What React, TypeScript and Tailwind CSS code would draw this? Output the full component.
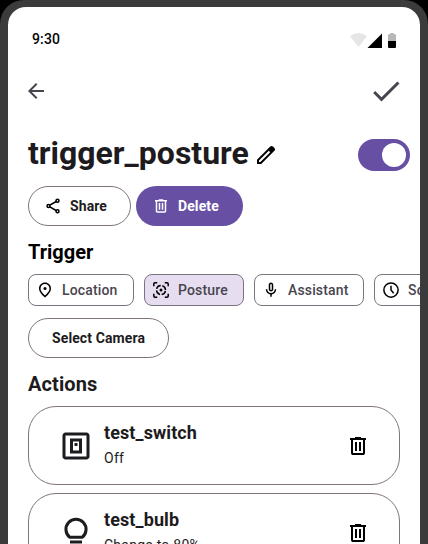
import type { ReactNode } from "react";

type IconProps = { size: number; className?: string; children: ReactNode };

function Icon({ size, className = "", children }: IconProps) {
  return (
    <svg width={size} height={size} viewBox="0 0 24 24" fill="currentColor" className={"shrink-0 " + className}>
      {children}
    </svg>
  );
}

const share = (
  <g fill="none" stroke="currentColor" strokeWidth="2">
    <circle cx="18" cy="5" r="2" />
    <circle cx="6" cy="12" r="2" />
    <circle cx="18" cy="19" r="2" />
    <path d="M7.8 10.9 16.2 6M7.8 13.1l8.4 4.9" />
  </g>
);
const trash = (
  <path d="M7 21q-.825 0-1.412-.587T5 19V6H4V4h5V3h6v1h5v2h-1v13q0 .825-.587 1.413T17 21zM17 6H7v13h10zM9 17h2V8H9zm4 0h2V8h-2z" />
);
const pin = (
  <>
    <path d="M12 2c4.2 0 8 3.22 8 8.2 0 3.32-2.67 7.25-8 11.8-5.33-4.55-8-8.48-8-11.8C4 5.22 7.8 2 12 2m6 8.2C18 6.57 15.35 4 12 4s-6 2.57-6 6.2c0 2.34 1.95 5.44 6 9.14 4.05-3.7 6-6.8 6-9.14" />
    <circle cx="12" cy="10" r="2" />
  </>
);
const posture = (
  <>
    <path
      d="M2.4 7V4q0-1.6 1.6-1.6h3M17 2.4h3q1.6 0 1.6 1.6v3M21.6 17v3q0 1.6-1.6 1.6h-3M7 21.6H4q-1.6 0-1.6-1.6v-3"
      fill="none"
      stroke="currentColor"
      strokeWidth="2"
    />
    <circle cx="12" cy="12" r="6" fill="none" stroke="currentColor" strokeWidth="2" strokeDasharray="7.2 2.225" strokeDashoffset="-1.11" />
    <circle cx="12" cy="12" r="2" />
  </>
);
const mic = (
  <path d="M12 14c1.66 0 3-1.34 3-3V5c0-1.66-1.34-3-3-3S9 3.34 9 5v6c0 1.66 1.34 3 3 3m-1-9c0-.55.45-1 1-1s1 .45 1 1v6c0 .55-.45 1-1 1s-1-.45-1-1zm6 6c0 2.76-2.24 5-5 5s-5-2.24-5-5H5c0 3.53 2.61 6.43 6 6.92V21h2v-3.08c3.39-.49 6-3.39 6-6.92z" />
);
const clock = (
  <g fill="none" stroke="currentColor" strokeWidth="2">
    <circle cx="12" cy="12" r="9.5" />
    <path d="M12 6.2V12l3.6 4.2" />
  </g>
);
const wallSwitch = (
  <path d="M5 3h14q.83 0 1.41.59T21 5v14q0 .83-.59 1.41T19 21H5q-.83 0-1.41-.59T3 19V5q0-.83.59-1.41T5 3m0 2v14h14V5zm3 2h8v10H8zm2 2v6h4V9zm1 1h2v2h-2z" fillRule="evenodd" />
);
const bulb = (
  <>
    <path d="M7.9 14.9A6.7 6.7 0 1 1 16.1 14.9z" fill="none" stroke="currentColor" strokeWidth="2" />
    <path d="M8 17h8v2H8zm1.8 3h4.4q0 2-2.2 2t-2.2-2" />
  </>
);

function Chip({ icon, label, className }: { icon: ReactNode; label: string; className: string }) {
  return (
    <div className={"flex h-8 shrink-0 items-center gap-2 rounded-lg border border-[#79747e] pl-[7px] text-sm font-medium tracking-[0.15px] text-[#49454f] " + className}>
      <Icon size={18} className="text-black">{icon}</Icon>
      <span>{label}</span>
    </div>
  );
}

function ActionCard({ icon, name, state }: { icon: ReactNode; name: string; state: string }) {
  return (
    <div className="flex h-[79px] shrink-0 items-center rounded-[28px] border border-[#7f747a] pr-[29px] pb-px pl-[29px] text-[#1d1b20]">
      <Icon size={36} className="mt-px">{icon}</Icon>
      <div className="ml-[10px] flex-1">
        <div className="text-lg leading-[26px] font-bold tracking-[0.1px]">{name}</div>
        <div className="text-sm leading-6 tracking-[0.25px]">{state}</div>
      </div>
      <Icon size={24} className="mt-px text-black">{trash}</Icon>
    </div>
  );
}

export default function App() {
  return (
    <div className="h-[544px] w-[428px] overflow-hidden bg-black font-['Roboto',sans-serif]">
      <div className="h-full rounded-t-[24px] bg-[#3b3b3b] px-2 pt-[7px]">
        <main className="flex h-full flex-col overflow-hidden rounded-t-[18px] bg-white pl-5">
          <div className="flex h-16 shrink-0 items-center justify-between pr-6 pl-1 text-sm font-medium tracking-[0.14px] text-[#050505]">
            <span>9:30</span>
            <svg width="46" height="15" viewBox="0 0 46 15" className="mt-[3px]">
              <path d="M0 3.2Q8.5-3.2 17 3.2L8.5 14z" fill="#e6e6e6" />
              <path d="M17.5 15H32V.5z" fill="#000" />
              <path d="M38 2.2q0-.9.9-.9h1.3V0h3.6v1.3h1.3q.9 0 .9.9V8h-8z" fill="#b8b8b8" />
              <path d="M38 8h8v6q0 1-1 1h-6q-1 0-1-1z" fill="#000" />
            </svg>
          </div>
          <div className="flex h-10 shrink-0 items-center justify-between pr-4 text-[#49454f]">
            <Icon size={24} className="-ml-1">
              <path d="M20 11H7.83l5.59-5.59L12 4l-8 8 8 8 1.41-1.41L7.83 13H20z" />
            </Icon>
            <Icon size={36}>
              <path d="M9 16.17 4.83 12l-1.42 1.41L9 19 21 7l-1.41-1.41z" />
            </Icon>
          </div>
          <div className="mt-6 flex h-10 shrink-0 items-center pr-[10px]">
            <h1 className="w-[226px] pb-1 text-[32px] leading-10 font-bold text-[#1d1b20]">trigger_posture</h1>
            <Icon size={24} className="text-black">
              <path d="M5 19h1.4L16.2 9.2l-1.4-1.4L5 17.6zM3 21v-4.25L16.2 3.58q.3-.28.66-.43T17.63 3t.77.15.65.45l1.37 1.4q.3.28.44.65t.14.75q0 .4-.14.76t-.44.67L7.25 21z" fillRule="evenodd" />
            </Icon>
            <div className="mr-0 ml-auto flex h-8 w-[52px] items-center justify-end rounded-full bg-[#6750a4] pr-1">
              <div className="size-6 rounded-full bg-white" />
            </div>
          </div>
          <div className="mt-[11px] flex shrink-0 gap-[5px] text-sm font-bold tracking-[0.1px]">
            <button className="flex h-10 w-[103px] items-center gap-2 rounded-full border border-[#7f747a] pl-[15px] text-[#1d1b20]">
              <Icon size={18} className="text-black">{share}</Icon>
              Share
            </button>
            <button className="flex h-10 w-[107px] items-center gap-2 rounded-full bg-[#6750a4] pl-4 text-white">
              <Icon size={18}>{trash}</Icon>
              Delete
            </button>
          </div>
          <h2 className="mt-3 h-7 shrink-0 text-xl leading-7 font-bold text-black">Trigger</h2>
          <div className="mt-2 flex shrink-0 gap-[10px] overflow-hidden">
            <Chip icon={pin} label="Location" className="w-[106px]" />
            <Chip icon={posture} label="Posture" className="w-[100px] bg-[#e6def0]" />
            <Chip icon={mic} label="Assistant" className="w-[110px]" />
            <Chip icon={clock} label="Schedule" className="w-[110px]" />
          </div>
          <button className="mt-3 h-10 w-[141px] shrink-0 rounded-full border border-[#7f747a] text-sm font-bold tracking-[0.1px] text-[#1d1b20]">
            Select Camera
          </button>
          <h2 className="mt-3 h-7 shrink-0 text-xl leading-7 font-bold tracking-[0.1px] text-[#1d1b20]">Actions</h2>
          <div className="mt-2 flex shrink-0 flex-col gap-2 pr-5">
            <ActionCard icon={wallSwitch} name="test_switch" state="Off" />
            <ActionCard icon={bulb} name="test_bulb" state="Change to 80%" />
          </div>
        </main>
      </div>
    </div>
  );
}
